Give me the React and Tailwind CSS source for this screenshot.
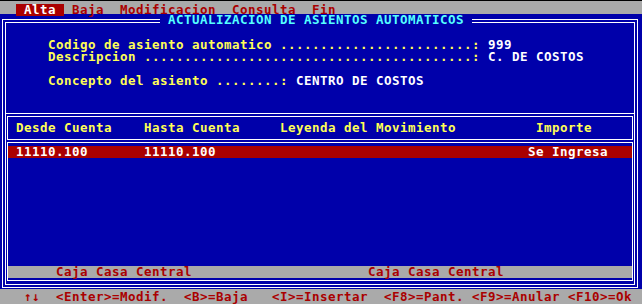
import React from "react";

const FONT = { fontFamily: '"DejaVu Sans Mono", "Liberation Mono", monospace' };

export default function App() {
  return (
    <div
      className="w-[642px] h-[304px] overflow-hidden flex flex-col bg-[#0000aa] font-bold text-[12.5px] tracking-[0.475px] leading-[12px]"
      style={FONT}
    >
      <div className="h-px bg-black shrink-0" />
      {/* menu bar */}
      <div className="h-[13px] shrink-0 bg-[#aaaaaa] pt-px whitespace-pre text-[#aa0000]">
        <span className="inline-block h-[12px] w-[16px]" />
        <span className="inline-block h-[12px] bg-[#aa0000] text-white">{" Alta "}</span>
        <span>{" Baja  Modificacion  Consulta  Fin"}</span>
      </div>

      {/* main */}
      <div className="relative h-[275px] shrink-0 pt-[5px] pl-[2px]">
        <div className="absolute left-[160px] top-0 h-[12px] w-[312px] bg-[#0000aa] text-[#55ffff] whitespace-pre">
          {" ACTUALIZACION DE ASIENTOS AUTOMATICOS "}
        </div>
        {/* outer frame */}
        <div className="w-[636px] h-[269px] border border-white p-[2px]">
          {/* inner frame */}
          <div className="h-full border border-white flex flex-col">
            {/* form */}
            <div className="h-[91px] shrink-0 border-b border-white pt-[16px] pl-[42px] whitespace-pre text-[#ffff55]">
              <div className="h-[12px]">
                {"Codigo de asiento automatico ........................: "}
                <span className="text-white">999</span>
              </div>
              <div className="h-[12px]">
                {"Descripcion .........................................: "}
                <span className="text-white">C. DE COSTOS</span>
              </div>
              <div className="h-[12px]" />
              <div className="h-[12px]">
                {"Concepto del asiento ........: "}
                <span className="text-white">CENTRO DE COSTOS</span>
              </div>
            </div>
            {/* header box */}
            <div className="mt-[2px] ml-px mr-px h-[24px] shrink-0 border border-white pt-[5px] pl-[8px] whitespace-pre text-[#ffff55]">
              {"Desde Cuenta    Hasta Cuenta     Leyenda del Movimiento          Importe"}
            </div>
            {/* list box */}
            <div className="mt-[2px] ml-px mr-px h-[139px] shrink-0 border border-white flex flex-col pt-[3px] pb-[2px]">
              <div className="h-[12px] bg-[#aa0000] text-white whitespace-pre pl-[8px]">
                {"11110.100       11110.100                                       Se Ingresa"}
              </div>
              <div className="flex-1" />
              <div className="h-[12px] bg-[#aaaaaa] text-[#aa0000] whitespace-pre pl-[48px]">
                {"Caja Casa Central                      Caja Casa Central"}
              </div>
            </div>
          </div>
        </div>
      </div>

      {/* status bar */}
      <div className="flex-1 bg-[#aaaaaa] pt-[2px] whitespace-pre text-[#aa0000]">
        {"   ↑↓  <Enter>=Modif.  <B>=Baja   <I>=Insertar  <F8>=Pant. <F9>=Anular <F10>=Ok"}
      </div>
    </div>
  );
}
